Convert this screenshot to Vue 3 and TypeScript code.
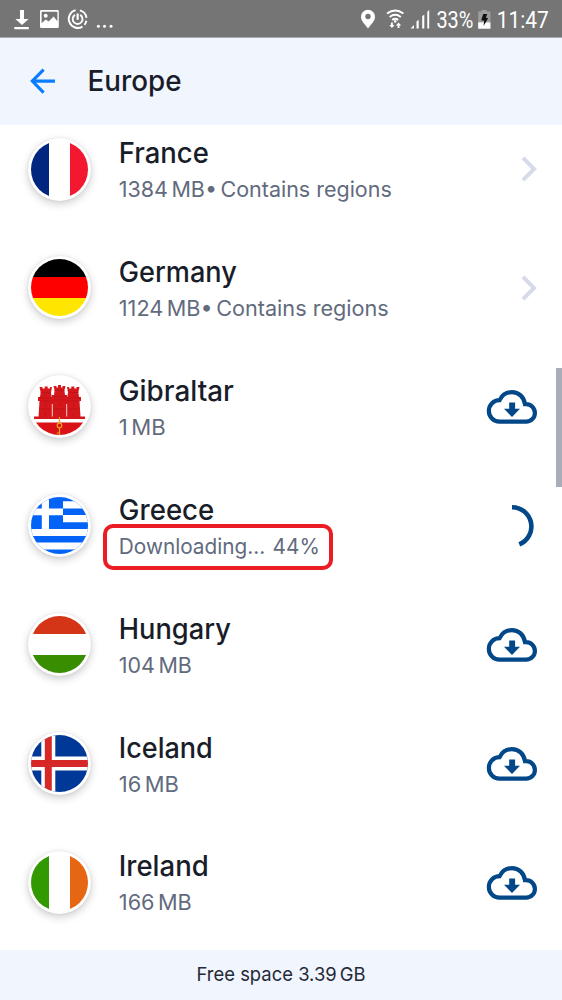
<script setup lang="ts">
type Action = 'open' | 'download' | 'progress'

interface Region {
  name: string
  flag: string
  size?: string
  status?: string
  note?: string
  action: Action
  nameWidth: number
  detailWidth: number
}

const regions: Region[] = [
  { name: 'France', flag: 'fr', size: '1384 MB', note: 'Contains regions', action: 'open', nameWidth: 90, detailWidth: 273 },
  { name: 'Germany', flag: 'de', size: '1124 MB', note: 'Contains regions', action: 'open', nameWidth: 118, detailWidth: 270 },
  { name: 'Gibraltar', flag: 'gi', size: '1 MB', action: 'download', nameWidth: 115, detailWidth: 47 },
  { name: 'Greece', flag: 'gr', status: 'Downloading... 44%', action: 'progress', nameWidth: 95.5, detailWidth: 201 },
  { name: 'Hungary', flag: 'hu', size: '104 MB', action: 'download', nameWidth: 112, detailWidth: 73 },
  { name: 'Iceland', flag: 'is', size: '16 MB', action: 'download', nameWidth: 94, detailWidth: 60 },
  { name: 'Ireland', flag: 'ie', size: '166 MB', action: 'download', nameWidth: 90, detailWidth: 73 },
]
</script>

<template>
  <div class="screen">
    <header class="status">
      <svg class="status-left" width="120" height="37" viewBox="0 0 120 37" fill="#fff">
        <path d="M20 10h4v9h4.6L22 25 15.4 19H20zM14.3 27h14.5v2.2H14.3z" />
        <path fill-rule="evenodd" d="M41.2 10h16.4a1.2 1.2 0 0 1 1.2 1.2v15.6a1.2 1.2 0 0 1-1.2 1.2H41.2a1.2 1.2 0 0 1-1.2-1.2V11.2a1.2 1.2 0 0 1 1.2-1.2zm.4 1.7v11.6l4.2-3.8 2.8 2 5-5 3.8 4.8v-9.6z" />
        <circle cx="45.7" cy="15.8" r="2" />
        <g fill="none" stroke="#fff" stroke-width="1.9">
          <path d="M75.6 10.2A9 9 0 1 0 82.5 26.6M79.9 10.3A9 9 0 0 1 86.5 17.8M86.4 20.8A9 9 0 0 1 84.5 24.8" />
          <path d="M75 14.9A4.9 4.9 0 1 0 80.2 14.9" />
          <path stroke-width="2.2" d="M77.6 13.5v6.3" />
        </g>
        <circle cx="98.4" cy="26.3" r="1.5" /><circle cx="104.5" cy="26.3" r="1.5" /><circle cx="111" cy="26.3" r="1.5" />
      </svg>
      <div class="status-right">
        <svg width="72" height="37" viewBox="359 0 72 37" fill="#fff">
          <path fill-rule="evenodd" d="M368 9.8a7 7 0 0 0-7 7c0 4.7 4 7.3 7 11.7 3-4.4 7-7 7-11.7a7 7 0 0 0-7-7zm0 4a2.7 2.7 0 1 1 0 5.4 2.7 2.7 0 0 1 0-5.4z" />
          <g fill="none" stroke="#fff" stroke-width="1.9">
            <path d="M387 13.6q8.2-6.4 16.4 0M389.6 16.9q5.6-4.4 11.2 0M392.2 20q3-2.4 6 0" />
          </g>
          <circle cx="395.2" cy="21.4" r="1.3" />
          <path d="M391 22.6h1.9v2.5h1.7l-2.7 3-2.6-3h1.7zM397.6 28.1h1.9v-2.5h1.7l-2.7-3-2.6 3h1.7z" />
          <path d="M410.5 28.6 414 25v3.6zM416.5 28.6v-7l2.2-1.8v8.8zM422.2 28.6V16.2l2.1-1.8v14.2zM427.3 28.6V11.7l1.9-1.7v18.6z" />
        </svg>
        <svg class="status-text" width="126" height="37" viewBox="436 0 126 37" fill="#fff">
          <text x="436.4" y="27.8" textLength="37" lengthAdjust="spacingAndGlyphs">33%</text>
          <path fill="#9e9e9e" d="M481.5 10h5.3v1.6h3.6v17h-12.2v-17h3.3z" />
          <path d="M478.2 22.4h12.2v6.3h-12.2z" />
          <path fill="#111" d="M483.2 14h4l-1.3 4h2.3l-4.6 8 .6-5.5h-3z" />
          <text x="496.8" y="27.8" textLength="52" lengthAdjust="spacingAndGlyphs">11:47</text>
        </svg>
      </div>
    </header>

    <nav class="toolbar">
      <svg class="back" width="28" height="28" viewBox="0 0 28 28" fill="none" stroke="#0a7cff" stroke-width="3.1">
        <path d="M27 13.1H4.5M15.6 1.6 4.3 13.1 15.6 24.6" />
      </svg>
      <svg class="heading" width="100" height="40">
        <text x="-0.5" y="29.3" textLength="94" lengthAdjust="spacingAndGlyphs">Europe</text>
      </svg>
    </nav>

    <main class="viewport">
      <ul class="list">
        <li v-for="region in regions" :key="region.name" class="row">
          <div class="badge">
            <svg width="57" height="57" viewBox="0 0 57 57" class="flag">
              <template v-if="region.flag === 'fr'">
                <rect width="18" height="57" fill="#00267f" /><rect x="39" width="18" height="57" fill="#f31830" />
              </template>
              <template v-else-if="region.flag === 'de'">
                <rect width="57" height="18" /><rect y="18" width="57" height="21" fill="#f00" /><rect y="39" width="57" height="18" fill="#ffe600" />
              </template>
              <template v-else-if="region.flag === 'gi'">
                <g fill="#d5161b">
                  <path d="M3 38.5h51V41H3z" />
                  <path d="M7.5 39 8.5 23H7v-4h2l.7-4.5L8.5 9h3v1.5h2.2v-2h3v2h2.2V9H21l-1 5.500.7 4.500H22v20z" />
                  <path d="M49.5 39l-1-16H50v-4h-2l-.7-4.500L48.500 9h-3v1.500h-2.200v-2h-3v2h-2.200V9H36l1 5.500-.7 4.500H35v20z" />
                  <path d="M21 39l1-17h-1v-5h2l.6-4.500L22.500 8h3v1.500H27V7h3v2.500h1.500V8h3l-1.100 4.500.6 4.500h2v5h-1l1 17z" />
                </g>
                <g fill="none" stroke="#a81217" stroke-width=".5">
                  <path d="M8 20h13M21.500 18.500h14M36 20h13M9.500 14.500h10M23.500 12.500h10M37.500 14.500h10M8.500 23H21M22 22h13M36 23h12.500" />
                  <path d="M14.500 25v4M28.500 24v5M42.500 25v4M14.500 34v5M28.500 34v5M42.500 34v5M10 31h10M23 31h11M37 31h10" />
                </g>
                <path stroke="#fff" stroke-width=".8" d="M21.300 26v12.500M35.700 26v12.500" />
                <path d="M0 44.500h57V57H0z" fill="#da1218" />
                <g fill="none" stroke="#e9a51e" stroke-width="1.2">
                  <path d="M28.500 39v6M28.500 50v7M25.800 55h2.700" /><circle cx="28.5" cy="47.5" r="2.3" />
                </g>
              </template>
              <template v-else-if="region.flag === 'gr'">
                <rect width="57" height="57" fill="#0463f7" />
                <path fill="#fff" d="M32 4.300h25v7.200H32zM32 18h25v7.200H32zM0 32h57v7H0zM0 45.500h57v7H0zM10.800 0H18v32h-7.200zM0 11.500h32v6.700H0z" />
              </template>
              <template v-else-if="region.flag === 'hu'">
                <rect width="57" height="18" fill="#d43516" /><rect y="39" width="57" height="18" fill="#388d00" />
              </template>
              <template v-else-if="region.flag === 'is'">
                <rect width="57" height="57" fill="#003897" />
                <path fill="#fff" d="M10.300 0h14v57h-14zM0 21.500h57v14H0z" />
                <path fill="#d72828" d="M13.800 0h7v57h-7zM0 25h57v7H0z" />
              </template>
              <template v-else>
                <rect width="18" height="57" fill="#339900" /><rect x="39" width="18" height="57" fill="#e76614" />
              </template>
            </svg>
          </div>
          <svg class="copy" width="300" height="76">
            <text class="name" x="-0.2" y="32.1" :textLength="region.nameWidth" lengthAdjust="spacingAndGlyphs">{{ region.name }}</text>
            <text class="detail" x="-0.2" y="65.8" :textLength="region.detailWidth" lengthAdjust="spacingAndGlyphs"><tspan v-if="region.size" class="amount">{{ region.size }}</tspan><tspan v-if="region.note" class="amount">• </tspan><tspan v-if="region.note">{{ region.note }}</tspan><tspan v-if="region.status" class="live">{{ region.status }}</tspan></text>
          </svg>
          <span v-if="region.action === 'progress'" class="callout"></span>
          <div class="action" :class="region.action">
            <svg v-if="region.action === 'open'" width="18" height="26" viewBox="0 0 18 26" fill="none" stroke="#d5dbe8" stroke-width="4">
              <path d="M2 1.800 13.100 13 2 24.200" />
            </svg>
            <svg v-else-if="region.action === 'download'" width="50" height="34" viewBox="0 0 50 34">
              <path fill="none" stroke="#024788" stroke-width="4.2" d="M12.500 31.600A10.500 10.500 0 0 1 12.600 10.200C15 5.200 19.200 2.100 25 2.100c6.700 0 11.900 4.800 13 12.100h1.200a8.700 8.700 0 0 1 0 17.400z" />
              <path fill="#024788" d="M22.200 12.400h5.900v6.300H33L25 27.100 17 18.700h5.200z" />
            </svg>
            <svg v-else width="50" height="50" viewBox="0 0 50 50" fill="none" stroke="#024788" stroke-width="4.6">
              <path d="M25 6.200A19.300 19.300 0 0 1 32.300 43.400" />
            </svg>
          </div>
        </li>
      </ul>
      <span class="scrollbar"></span>
    </main>

    <footer class="footer">
      <svg width="180" height="34">
        <text x="5.5" y="23" textLength="169" lengthAdjust="spacingAndGlyphs">Free space <tspan class="amount">3.39 GB</tspan></text>
      </svg>
    </footer>
  </div>
</template>

<style>
body {
  margin: 0;
  background: #fff;
}
</style>

<style scoped>
.screen {
  display: flex;
  flex-direction: column;
  width: 562px;
  height: 1000px;
  overflow: hidden;
  background: #fff;
  font-family: Inter, "Liberation Sans", sans-serif;
}
svg {
  display: block;
  flex: none;
  overflow: visible;
}
.status {
  display: flex;
  justify-content: space-between;
  box-sizing: border-box;
  height: 38px;
  background: #757575;
  border-bottom: 1px solid #a8abb2;
}
.status-right {
  display: flex;
  gap: 5px;
}
.status-text text {
  font: 400 23.5px Roboto, sans-serif;
}
.toolbar {
  display: flex;
  align-items: center;
  height: 87px;
  background: #f1f5fe;
}
.back {
  margin-left: 28px;
}
.heading {
  margin-left: 32px;
  fill: #191d2a;
  font-size: 28.5px;
  font-weight: 500;
}
.viewport {
  position: relative;
  height: 825px;
  overflow: hidden;
}
.list {
  margin: -15.4px 0 0;
  padding: 0;
  list-style: none;
}
.row {
  position: relative;
  display: flex;
  align-items: center;
  height: 118.9px;
}
.badge {
  box-sizing: border-box;
  width: 63px;
  height: 63px;
  margin-left: 28px;
  padding: 3px;
  border-radius: 50%;
  background: #fff;
  box-shadow: 0 3px 8px rgba(0, 0, 0, 0.2), 0 0 2px rgba(0, 0, 0, 0.1);
}
.flag {
  border-radius: 50%;
  overflow: hidden;
}
.copy {
  margin-left: 28px;
}
.name {
  fill: #191d2a;
  font-size: 28.4px;
  font-weight: 500;
}
.detail {
  fill: #626a7d;
  font-size: 21.4px;
}
.amount {
  word-spacing: -0.12em;
}
.live {
  word-spacing: 0.07em;
}
.action {
  margin-left: auto;
}
.open {
  margin-right: 23px;
}
.download {
  margin-right: 25px;
  padding-top: 1px;
}
.progress {
  margin-right: 25px;
}
.callout {
  position: absolute;
  left: 103px;
  top: 58px;
  box-sizing: border-box;
  width: 230px;
  height: 46px;
  border: 4px solid #ec1c24;
  border-radius: 10px;
}
.scrollbar {
  position: absolute;
  top: 243px;
  right: 0;
  width: 6px;
  height: 119px;
  background: #a9adb9;
}
.footer {
  display: flex;
  align-items: center;
  justify-content: center;
  height: 50px;
  background: #f1f5fe;
  fill: #252a38;
  font-size: 19px;
}
</style>
